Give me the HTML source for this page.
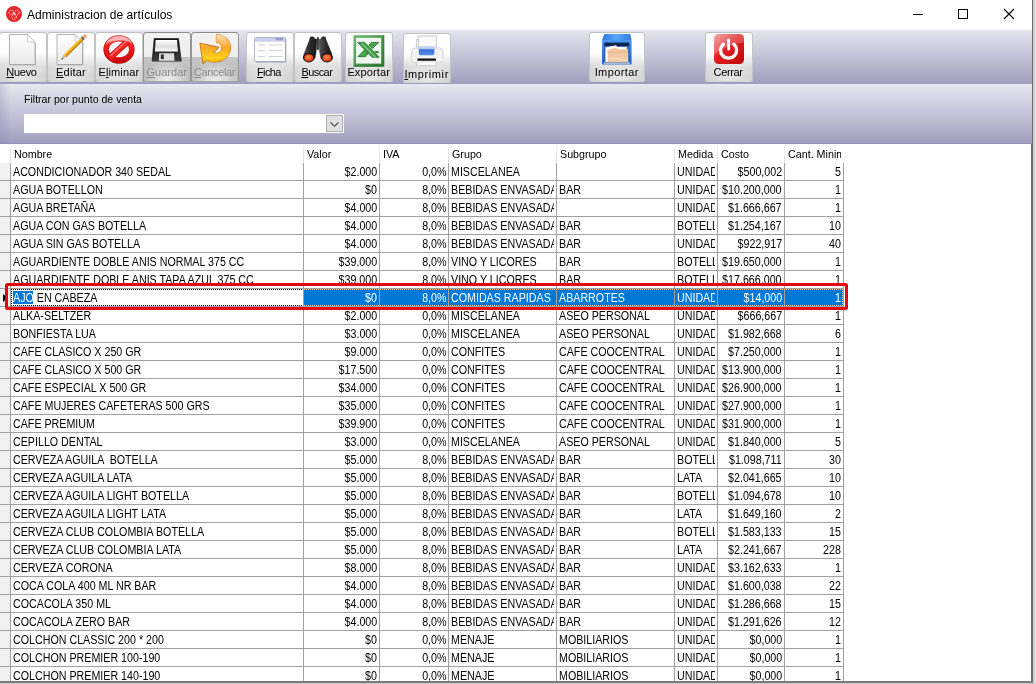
<!DOCTYPE html>
<html lang="es">
<head>
<meta charset="utf-8">
<title>Administracion de artículos</title>
<style>
html,body{margin:0;padding:0;}
body{width:1036px;height:684px;overflow:hidden;background:#fff;font-family:"Liberation Sans",sans-serif;position:relative;}
#win{position:absolute;left:0;top:0;width:1036px;height:684px;overflow:hidden;background:#fff;will-change:transform;}
#title{position:absolute;left:0;top:0;width:1032px;height:30px;background:#fff;}
#title .txt{position:absolute;left:27px;top:7px;font-size:12px;line-height:16px;color:#000;white-space:nowrap;letter-spacing:.05px;}
#appicon{position:absolute;left:5px;top:5px;width:18px;height:18px;}
.wc{position:absolute;top:0;height:30px;width:46px;}
#toolbar{position:absolute;left:0;top:30px;width:1032px;height:54px;background:linear-gradient(#e5e5ef 0%,#a09ebd 100%);}
.btn{position:absolute;top:2px;height:50px;width:48px;box-sizing:border-box;border:1px solid;border-color:#c1c1c1 #c4c4c4 #d2d2d2 #c4c4c4;border-radius:3.5px 3.5px 2.5px 2.5px;background:radial-gradient(ellipse 55% 50% at 50% 100%,rgba(255,255,255,.5),rgba(255,255,255,0) 100%),linear-gradient(#fff 0%,#fff 40%,#f1f1f1 52%,#dedede 68%,#d2d2d2 88%,#d0d0d0 100%);background-origin:border-box;}
.btn.dis{border-color:#8e8e8e #969696 #a4a4a4 #969696;background:radial-gradient(ellipse 50% 42% at 50% 100%,rgba(255,255,255,.8),rgba(255,255,255,0) 100%),linear-gradient(#f2f2f2 0%,#eeeeee 49.9%,#c5c5c5 50%,#bcbcbc 100%);background-origin:border-box;}
#icons{position:absolute;left:0;top:0;}
.btn .lb{position:absolute;left:-10px;right:-10px;top:32px;text-align:center;font-size:11px;line-height:14px;color:#000;white-space:nowrap;}
.btn.dis .lb{color:#8c8c8c;}
.btn .lb u{text-decoration:underline;text-underline-offset:1px;}
#filter{position:absolute;left:0;top:84px;width:1032px;height:60px;background:linear-gradient(90deg,rgba(120,118,165,.24) 0,rgba(120,118,165,0) 11px),linear-gradient(#e8e8f1 0%,#a2a0bf 97%,#908eae 100%);}
#filter .lab{position:absolute;left:24px;top:8px;font-size:11px;line-height:14px;color:#000;white-space:nowrap;transform:scaleX(.96);transform-origin:0 50%;}
#combo{position:absolute;left:24px;top:30px;width:320px;height:19px;background:#fff;}
#combo .dd{position:absolute;right:1px;top:1px;width:17px;height:17px;box-sizing:border-box;background:#e1e1e1;border:1px solid #adadad;}
#grid{position:absolute;left:0;top:144px;width:1031px;height:537px;background:#fff;overflow:hidden;}
#gridin{position:absolute;left:0;top:-144px;width:1031px;height:700px;}
.hc{position:absolute;top:144px;height:18px;overflow:hidden;font-size:11px;line-height:20px;color:#000;white-space:nowrap;}
.hc span{position:absolute;left:2.6px;top:0;transform:scaleX(.975);transform-origin:0 50%;}
.hs{position:absolute;top:144px;width:1px;height:18px;background:linear-gradient(#f4f4f4,#dcdcdc);}
.row{position:absolute;left:0;width:844px;height:18px;}
.row .ind{position:absolute;left:0;top:0;width:10px;height:17px;background:#f0f0f0;border-right:1px solid #a0a0a0;border-bottom:1px solid #a0a0a0;}
.c{position:absolute;top:0;height:17px;overflow:hidden;border-right:1px solid #a0a0a0;border-bottom:1px solid #a0a0a0;font-size:12.5px;line-height:18px;color:#000;white-space:nowrap;background:#fff;}
.c span{position:absolute;top:0;white-space:pre;transform:scaleX(.855);}
.c.l span{left:2px;transform-origin:0 50%;}
.c.r span{right:2px;transform-origin:100% 50%;}
.c.l::after,.hc::after{content:"";position:absolute;right:0;top:0;width:2px;height:100%;background:#fff;}
.row.sel .c{background:#0078d7;color:#fff;}
.row.sel .c::after{background:#0078d7;}
.row.sel .c.edit{background:#fff;color:#000;}
.row.sel .c.edit::after{background:#fff;}
.hl{font-weight:normal;color:#fff;position:relative;z-index:1;}
.hlbg{position:absolute;left:2px;top:2px;width:20px;height:13px;background:#0078d7;}
.tri{position:absolute;left:3px;top:5px;width:0;height:0;border-left:5px solid #000;border-top:4.5px solid transparent;border-bottom:4.5px solid transparent;}
.fx{position:absolute;height:1px;background:repeating-linear-gradient(90deg,#000 0,#000 1px,transparent 1px,transparent 2px);}
.fy{position:absolute;width:1px;background:repeating-linear-gradient(180deg,#000 0,#000 1px,transparent 1px,transparent 2px);}
.fx.w{background:repeating-linear-gradient(90deg,#eec39c 0,#eec39c 1px,transparent 1px,transparent 2px);}
.fy.w{background:repeating-linear-gradient(180deg,#eec39c 0,#eec39c 1px,transparent 1px,transparent 2px);}
#redbox{position:absolute;left:5px;top:283px;width:843px;height:27px;box-sizing:border-box;border:3px solid #e3060c;border-right-width:3.5px;border-radius:2.5px;}
#rb{position:absolute;left:1032px;top:0;width:4px;height:684px;background:linear-gradient(90deg,#6e6e6e 0,#6e6e6e 1px,#c4c4c4 1px,#e6e6e6 4px);}
#bb{position:absolute;left:0;top:681px;width:1033px;height:3px;background:linear-gradient(#7a7a7a 0,#7a7a7a 1.5px,#c8c8c8 2px,#d8d8d8 3px);}
#gr{position:absolute;left:1031px;top:144px;width:1px;height:538px;background:#6e6e6e;}
</style>
</head>
<body>
<div id="win">
<div id="title">
<div id="appicon"><svg width="18" height="18" viewBox="5 5 18 18"><circle cx="14" cy="14" r="8" fill="#e8282c"/><g fill="none" stroke="#fff" stroke-width=".9" stroke-dasharray="1.1 .9"><circle cx="11.300" cy="12.600" r="2.300"/><circle cx="16.700" cy="12.600" r="2.300"/><circle cx="14" cy="16.900" r="2.300"/></g><path d="M12.800 13.300h2.400" stroke="#fff" stroke-width="1"/></svg></div>
<div class="txt">Administracion de artículos</div>
<svg class="wc" style="left:895px" viewBox="0 0 46 30"><path d="M18 14.5h10" stroke="#000" stroke-width="1" fill="none"/></svg>
<svg class="wc" style="left:940px" viewBox="0 0 46 30"><rect x="18.5" y="9.5" width="9" height="9" stroke="#000" stroke-width="1" fill="none"/></svg>
<svg class="wc" style="left:986px" viewBox="0 0 46 30"><path d="M18 9l10 10M28 9l-10 10" stroke="#000" stroke-width="1.1" fill="none"/></svg>
</div>
<div id="toolbar">
<div class="btn" style="left:-1px;width:48px;top:2px"><div class="lb" style="letter-spacing:-0.28px;margin-left:-3.0px"><u>N</u>uevo</div></div>
<div class="btn" style="left:47px;width:48px;top:2px"><div class="lb" style="letter-spacing:0.18px;margin-left:-0.0px"><u>E</u>ditar</div></div>
<div class="btn" style="left:95px;width:48px;top:2px"><div class="lb" style="letter-spacing:0.13px;margin-left:-0.3px">E<u>l</u>iminar</div></div>
<div class="btn dis" style="left:143px;width:48px;top:2px"><div class="lb" style="letter-spacing:0.03px;margin-left:-0.6px"><u>G</u>uardar</div></div>
<div class="btn dis" style="left:191px;width:48px;top:2px"><div class="lb" style="letter-spacing:-0.33px;margin-left:-1.0px"><u>C</u>ancelar</div></div>
<div class="btn" style="left:246px;width:48px;top:2px"><div class="lb" style="letter-spacing:-0.65px;margin-left:-2.3px"><u>F</u>icha</div></div>
<div class="btn" style="left:294px;width:48px;top:2px"><div class="lb" style="letter-spacing:-0.58px;margin-left:-2.3px"><u>B</u>uscar</div></div>
<div class="btn" style="left:345px;width:48px;top:2px"><div class="lb" style="letter-spacing:0.14px;margin-left:-0.5px">Exportar</div></div>
<div class="btn" style="left:403px;width:48px;top:3px"><div class="lb" style="top:33px;letter-spacing:0.60px;margin-left:-0.7px"><u>I</u>mprimir</div></div>
<div class="btn" style="left:589px;width:56px;top:2px"><div class="lb" style="letter-spacing:0.40px;margin-left:-0.6px">Importar</div></div>
<div class="btn" style="left:705px;width:48px;top:2px"><div class="lb" style="letter-spacing:-0.34px;margin-left:-1.8px">Cerrar</div></div>
<svg id="icons" width="1032" height="54" viewBox="0 30 1032 54">
<defs>
<linearGradient id="gPage" x1="0" y1="0" x2="0" y2="1"><stop offset="0" stop-color="#ffffff"/><stop offset="1" stop-color="#e9e9e9"/></linearGradient>
<linearGradient id="gPen" x1="0" y1="0" x2="1" y2="1"><stop offset="0" stop-color="#ffe27a"/><stop offset=".5" stop-color="#f6b921"/><stop offset="1" stop-color="#b97c0c"/></linearGradient>
<linearGradient id="gRed" x1="0" y1="0" x2="0" y2="1"><stop offset="0" stop-color="#ff9a9a"/><stop offset=".35" stop-color="#f62020"/><stop offset="1" stop-color="#c40808"/></linearGradient>
<linearGradient id="gOr" gradientUnits="userSpaceOnUse" x1="0" y1="34" x2="0" y2="64"><stop offset="0" stop-color="#ffe6c4"/><stop offset=".45" stop-color="#ffa628"/><stop offset=".8" stop-color="#ffd21a"/><stop offset="1" stop-color="#f09a10"/></linearGradient>
<linearGradient id="gBlk" x1="0" y1="0" x2="0" y2="1"><stop offset="0" stop-color="#161616"/><stop offset="1" stop-color="#3c3c3c"/></linearGradient>
<linearGradient id="gLbl" x1="0" y1="0" x2="0" y2="1"><stop offset="0" stop-color="#ffffff"/><stop offset=".6" stop-color="#dedede"/><stop offset="1" stop-color="#fafafa"/></linearGradient>
<linearGradient id="gGreen" x1="0" y1="0" x2="1" y2="1"><stop offset="0" stop-color="#6cba6c"/><stop offset="1" stop-color="#2a7a2e"/></linearGradient>
<linearGradient id="gBlue" x1="0" y1="0" x2="0" y2="1"><stop offset="0" stop-color="#a8c4f4"/><stop offset=".5" stop-color="#3f74dc"/><stop offset="1" stop-color="#5b8fe8"/></linearGradient>
<linearGradient id="gBox" x1="0" y1="0" x2="0" y2="1"><stop offset="0" stop-color="#4a9af0"/><stop offset="1" stop-color="#1f5fd0"/></linearGradient>
<linearGradient id="gPow" x1="0" y1="0" x2="1" y2="1"><stop offset="0" stop-color="#f08a8a"/><stop offset=".45" stop-color="#e02020"/><stop offset="1" stop-color="#c00808"/></linearGradient>
<radialGradient id="gLens" cx=".45" cy=".4" r=".6"><stop offset="0" stop-color="#ff8a50"/><stop offset="1" stop-color="#e03410"/></radialGradient>
<linearGradient id="gBar" x1="0" y1="0" x2="1" y2="0"><stop offset="0" stop-color="#5a5a5a"/><stop offset=".5" stop-color="#2c2c2c"/><stop offset="1" stop-color="#161616"/></linearGradient>
<linearGradient id="gPen2" x1="0" y1="0" x2="0" y2="1"><stop offset="0" stop-color="#fbd25a"/><stop offset=".45" stop-color="#f5b31c"/><stop offset="1" stop-color="#a87208"/></linearGradient>
<linearGradient id="gBoxT" x1="0" y1="0" x2="1" y2="0"><stop offset="0" stop-color="#2f78e0"/><stop offset=".5" stop-color="#5aa6f8"/><stop offset="1" stop-color="#2f78e0"/></linearGradient>
</defs>
<!-- Nuevo -->
<g>
<path d="M9.5 34.5h18l7.5 7.5v22.5h-25.5z" fill="url(#gPage)" stroke="#b2b2b2" stroke-width="1"/>
<path d="M27.5 34.5v7.5h7.5z" fill="#f6f6f6" stroke="#c4c4c4" stroke-width=".8"/>
<path d="M10 65h25.5v-22" fill="none" stroke="#9a9a9a" stroke-width=".8" opacity=".7"/>
</g>
<!-- Editar -->
<g>
<path d="M57 34.5h18l7.5 7.5v22.5h-25.5z" fill="url(#gPage)" stroke="#b2b2b2" stroke-width="1"/>
<path d="M75 34.5v7.5h7.5z" fill="#f6f6f6" stroke="#c4c4c4" stroke-width=".8"/>
<path d="M57.5 65h25.5v-22" fill="none" stroke="#9a9a9a" stroke-width=".8" opacity=".7"/>
<g transform="translate(61 59.800) rotate(-44.600)">
<path d="M0 0L5.500-1.900V1.900z" fill="#d9b98a"/>
<path d="M0 0L2.400-.85V.85z" fill="#4a4440"/>
<rect x="5.500" y="-1.900" width="24" height="3.800" fill="url(#gPen2)"/>
<rect x="29.500" y="-1.900" width="2" height="3.800" fill="#5c6078"/>
<path d="M31.500-1.900h2a1.700 1.700 0 0 1 1.700 1.700v.4a1.700 1.700 0 0 1-1.700 1.700h-2z" fill="#f0a070"/>
</g>
</g>
<!-- Eliminar -->
<g>
<ellipse cx="119" cy="49.500" rx="15.600" ry="14.300" fill="#b00a0a"/>
<ellipse cx="119" cy="49.400" rx="14.900" ry="13.600" fill="url(#gRed)"/>
<ellipse cx="119" cy="49.400" rx="10.400" ry="8.300" fill="#fff" stroke="#c41010" stroke-width=".7"/>
<path d="M110.300 57.300L127.800 41.300" stroke="#c20c0c" stroke-width="6.400"/>
<path d="M109.300 58.200L128.800 40.400" stroke="#f42020" stroke-width="5.400"/>
<path d="M110.300 55.800L127 40.600" stroke="#ff7a7a" stroke-width="1.800" opacity=".8"/>
<path d="M105.500 44.500a14.500 12 0 0 1 27-1a17 9.500 0 0 0-27 1z" fill="#ffc0c0" opacity=".8"/>
</g>
<!-- Guardar -->
<g>
<path d="M154.2 38.5h24.3l2.8 22.6h-29.2z" fill="url(#gBlk)" stroke="#111" stroke-width=".6" stroke-linejoin="round"/>
<path d="M155.6 40h21.4l.9 11.4h-23z" fill="url(#gLbl)"/>
<path d="M159.2 53.3h14.8l.5 7.8h-15.7z" fill="#dcdcdc"/>
<rect x="160.8" y="54.5" width="3" height="4.6" fill="#2a2a2a"/>
<path d="M152 61.2h29.4" stroke="#6a6a6a" stroke-width=".8"/>
</g>
<!-- Cancelar -->
<g stroke="#c87a14" stroke-width="1.100" stroke-linejoin="round">
<path id="cA" d="M216.400 34.600c8 .4 14 5.600 14 13 0 8.200-7 14.400-16.200 14.400-3.600 0-6.400-.8-8.700-2.300l6-8c1.300 1.100 2.800 1.600 4.600 1.600 3.400 0 5.700-2.200 5.700-5.300 0-3.200-2.200-5.400-5.400-5.800z" fill="url(#gOr)"/>
<path id="cB" d="M200 43.400l18.800 4-6.600 6.500-9.200 9.800z" fill="url(#gOr)"/>
</g>
<path d="M216.400 34.600c8 .4 14 5.600 14 13 0 8.200-7 14.400-16.200 14.400-3.600 0-6.400-.8-8.700-2.300l6-8c1.300 1.100 2.800 1.600 4.600 1.600 3.400 0 5.700-2.200 5.700-5.300 0-3.200-2.200-5.400-5.400-5.800z" fill="url(#gOr)"/>
<path d="M200.600 44.100l17 3.600-6 6-8.200 8.700z" fill="url(#gOr)"/>
<!-- Ficha -->
<g>
<rect x="254.500" y="37.500" width="31" height="24" rx="1" fill="#fdfdfe" stroke="#b4b4cf" stroke-width="1"/>
<rect x="255" y="38" width="30" height="3.800" fill="#cfcff0"/>
<rect x="275.500" y="38" width="7.500" height="2.200" fill="#9a9acb"/>
<path d="M285.900 39v23.100h-30.500" fill="none" stroke="#8a8aa6" stroke-width=".9" opacity=".75"/>
<g stroke="#d2d2d2" stroke-width="1.100"><path d="M258 45h7M258 50.500h7M258 56.500h7M269 45h13M269 50.500h13M269 56.500h13"/></g>
</g>
<!-- Buscar -->
<g>
<rect x="309.600" y="36.600" width="5" height="5" rx="2" fill="#2a2a2a"/>
<rect x="321" y="36.600" width="5" height="5" rx="2" fill="#2a2a2a"/>
<path d="M309.500 39.500c3-1.500 6-1 7.500 0l-.6 12-1.200 7h-12.200l.800-5z" fill="url(#gBar)"/>
<path d="M326.200 39.500c-3-1.500-6-1-7.500 0l.6 12 1.200 7h12.200l-.8-5z" fill="url(#gBar)"/>
<rect x="316.700" y="37" width="2.200" height="13" rx="1" fill="#3a3a3a"/>
<ellipse cx="308.800" cy="57.600" rx="5.800" ry="4.900" fill="#141414"/>
<ellipse cx="327" cy="57.600" rx="5.800" ry="4.900" fill="#141414"/>
<ellipse cx="308.800" cy="57.800" rx="4.500" ry="3.600" fill="url(#gLens)"/>
<ellipse cx="327" cy="57.800" rx="4.500" ry="3.600" fill="url(#gLens)"/>
</g>
<!-- Exportar -->
<g>
<rect x="353.500" y="35.200" width="30.300" height="31" fill="url(#gGreen)"/>
<path d="M353.500 66.200h30.300v-31" fill="none" stroke="#256f2a" stroke-width="1"/>
<rect x="356" y="37.800" width="25.200" height="25.800" fill="#eef7ee"/>
<path d="M371.300 42.400h7.200l-6.100 6.300-3.500-3.600zM357.900 56.700h7.400l3.700-3.900-3.600-3.700z" fill="#4aa64e" stroke="#226d28" stroke-width=".8" stroke-linejoin="round"/>
<path d="M357.700 42.400h7l14.400 14.900h-7z" fill="#3f9c45" stroke="#226d28" stroke-width=".8" stroke-linejoin="round"/>
<path d="M361.600 43.300l13.800 14" stroke="#8ed392" stroke-width="1.300" opacity=".85"/>
<path d="M374 51h4.600v2.200h-2.500z" fill="#2f8a35"/>
</g>
<!-- Imprimir -->
<g>
<path d="M416.500 39.500h2v10h-2z" fill="#f4f4f4" stroke="#bdbdbd" stroke-width=".7"/>
<rect x="418.300" y="36" width="18" height="14" fill="#fbfbfb" stroke="#bdbdbd" stroke-width=".8"/>
<rect x="411.500" y="48" width="31.500" height="14.800" rx="3.500" fill="#f3f3f3" stroke="#cfcfcf" stroke-width=".8"/>
<path d="M418.800 46h15.600v7.500c0 1-.8 1.700-1.700 1.700h-12.200c-1 0-1.700-.8-1.700-1.700z" fill="url(#gBlue)"/>
<rect x="418.800" y="46" width="15.600" height="3" fill="#e8eefb" opacity=".6"/>
<rect x="417.300" y="58.600" width="18.700" height="2.300" rx=".8" fill="#111"/>
<path d="M417.800 61h17.800l1.400 4.600h-20.600z" fill="#fafafa" stroke="#bdbdbd" stroke-width=".7"/>
</g>
<!-- Importar -->
<g>
<path d="M604.300 34h26l1.300 6.200h-29.600z" fill="url(#gBoxT)"/>
<rect x="602" y="40" width="29.600" height="24.400" rx="1" fill="url(#gBox)"/>
<rect x="604.300" y="42.600" width="25" height="19.800" fill="#13244e"/>
<rect x="604.300" y="46" width="25" height="16.400" fill="#3f6fc4"/>
<path d="M605.500 47.500l10.500-2.300 1.200 1.800h9.500v15h-21.200z" fill="#fdfdfd"/>
<path d="M607.500 50l8.500-2.600 2 1.900h10l.3 13h-20.300z" fill="#f1c9a2"/>
<path d="M607.700 51.500h20.300v1.200h-20.300z" fill="#e0ae84" opacity=".6"/>
<path d="M609 58.500h9l3 1.500h7" stroke="#fae3cc" stroke-width="1.200" fill="none" opacity=".8"/>
<rect x="603.500" y="62.400" width="26.600" height="2" fill="#aab8d2"/>
</g>
<!-- Cerrar -->
<g>
<rect x="714" y="34" width="30" height="30" rx="4.500" fill="url(#gPow)"/>
<path d="M714 38.500a4.500 4.500 0 0 1 4.500-4.500h21a4.500 4.500 0 0 1 4.500 4.500v4c-10 1-22 5-30 12z" fill="#fff" opacity=".22"/>
<path d="M723.300 44.200a8 8 0 1 0 10.600 0" fill="none" stroke="#fff" stroke-width="3.300" stroke-linecap="round"/>
<path d="M728.600 40v9" stroke="#fff" stroke-width="3" stroke-linecap="round"/>
</g>
</svg>
</div>
<div id="filter">
<div class="lab">Filtrar por punto de venta</div>
<div id="combo"><div class="dd"><svg width="15" height="15" viewBox="0 0 15 15" style="position:absolute;left:0;top:0"><path d="M3.500 6.300l4 4 4-4" stroke="#444" stroke-width="1.100" fill="none"/></svg></div></div>
</div>
<div id="grid"><div id="gridin">
<div class="hc" style="left:11px;width:292px"><span>Nombre</span></div>
<div class="hs" style="left:303px"></div>
<div class="hc" style="left:304px;width:75px"><span>Valor</span></div>
<div class="hs" style="left:379px"></div>
<div class="hc" style="left:380px;width:68px"><span>IVA</span></div>
<div class="hs" style="left:448px"></div>
<div class="hc" style="left:449px;width:107px"><span>Grupo</span></div>
<div class="hs" style="left:556px"></div>
<div class="hc" style="left:557px;width:117px"><span>Subgrupo</span></div>
<div class="hs" style="left:674px"></div>
<div class="hc" style="left:675px;width:42px"><span>Medida</span></div>
<div class="hs" style="left:717px"></div>
<div class="hc" style="left:718px;width:66px"><span>Costo</span></div>
<div class="hs" style="left:784px"></div>
<div class="hc" style="left:785px;width:58px"><span>Cant. Minima</span></div>
<div class="hs" style="left:10px"></div>
<div class="row" style="top:163px">
<div class="ind"></div>
<div class="c l" style="left:11px;width:292px"><span>ACONDICIONADOR 340 SEDAL</span></div>
<div class="c r" style="left:304px;width:75px"><span>$2.000</span></div>
<div class="c r" style="left:380px;width:68px"><span>0,0%</span></div>
<div class="c l" style="left:449px;width:107px"><span>MISCELANEA</span></div>
<div class="c l" style="left:557px;width:117px"><span></span></div>
<div class="c l" style="left:675px;width:42px"><span>UNIDAD</span></div>
<div class="c r" style="left:718px;width:66px"><span>$500,002</span></div>
<div class="c r" style="left:785px;width:58px"><span>5</span></div>
</div>
<div class="row" style="top:181px">
<div class="ind"></div>
<div class="c l" style="left:11px;width:292px"><span>AGUA BOTELLON</span></div>
<div class="c r" style="left:304px;width:75px"><span>$0</span></div>
<div class="c r" style="left:380px;width:68px"><span>8,0%</span></div>
<div class="c l" style="left:449px;width:107px"><span>BEBIDAS ENVASADAS</span></div>
<div class="c l" style="left:557px;width:117px"><span>BAR</span></div>
<div class="c l" style="left:675px;width:42px"><span>UNIDAD</span></div>
<div class="c r" style="left:718px;width:66px"><span>$10.200,000</span></div>
<div class="c r" style="left:785px;width:58px"><span>1</span></div>
</div>
<div class="row" style="top:199px">
<div class="ind"></div>
<div class="c l" style="left:11px;width:292px"><span>AGUA BRETAÑA</span></div>
<div class="c r" style="left:304px;width:75px"><span>$4.000</span></div>
<div class="c r" style="left:380px;width:68px"><span>8,0%</span></div>
<div class="c l" style="left:449px;width:107px"><span>BEBIDAS ENVASADAS</span></div>
<div class="c l" style="left:557px;width:117px"><span></span></div>
<div class="c l" style="left:675px;width:42px"><span>UNIDAD</span></div>
<div class="c r" style="left:718px;width:66px"><span>$1.666,667</span></div>
<div class="c r" style="left:785px;width:58px"><span>1</span></div>
</div>
<div class="row" style="top:217px">
<div class="ind"></div>
<div class="c l" style="left:11px;width:292px"><span>AGUA CON GAS BOTELLA</span></div>
<div class="c r" style="left:304px;width:75px"><span>$4.000</span></div>
<div class="c r" style="left:380px;width:68px"><span>8,0%</span></div>
<div class="c l" style="left:449px;width:107px"><span>BEBIDAS ENVASADAS</span></div>
<div class="c l" style="left:557px;width:117px"><span>BAR</span></div>
<div class="c l" style="left:675px;width:42px"><span>BOTELLA</span></div>
<div class="c r" style="left:718px;width:66px"><span>$1.254,167</span></div>
<div class="c r" style="left:785px;width:58px"><span>10</span></div>
</div>
<div class="row" style="top:235px">
<div class="ind"></div>
<div class="c l" style="left:11px;width:292px"><span>AGUA SIN GAS BOTELLA</span></div>
<div class="c r" style="left:304px;width:75px"><span>$4.000</span></div>
<div class="c r" style="left:380px;width:68px"><span>8,0%</span></div>
<div class="c l" style="left:449px;width:107px"><span>BEBIDAS ENVASADAS</span></div>
<div class="c l" style="left:557px;width:117px"><span>BAR</span></div>
<div class="c l" style="left:675px;width:42px"><span>UNIDAD</span></div>
<div class="c r" style="left:718px;width:66px"><span>$922,917</span></div>
<div class="c r" style="left:785px;width:58px"><span>40</span></div>
</div>
<div class="row" style="top:253px">
<div class="ind"></div>
<div class="c l" style="left:11px;width:292px"><span>AGUARDIENTE DOBLE ANIS NORMAL 375 CC</span></div>
<div class="c r" style="left:304px;width:75px"><span>$39.000</span></div>
<div class="c r" style="left:380px;width:68px"><span>8,0%</span></div>
<div class="c l" style="left:449px;width:107px"><span>VINO Y LICORES</span></div>
<div class="c l" style="left:557px;width:117px"><span>BAR</span></div>
<div class="c l" style="left:675px;width:42px"><span>BOTELLA</span></div>
<div class="c r" style="left:718px;width:66px"><span>$19.650,000</span></div>
<div class="c r" style="left:785px;width:58px"><span>1</span></div>
</div>
<div class="row" style="top:271px">
<div class="ind"></div>
<div class="c l" style="left:11px;width:292px"><span>AGUARDIENTE DOBLE ANIS TAPA AZUL 375 CC</span></div>
<div class="c r" style="left:304px;width:75px"><span>$39.000</span></div>
<div class="c r" style="left:380px;width:68px"><span>8,0%</span></div>
<div class="c l" style="left:449px;width:107px"><span>VINO Y LICORES</span></div>
<div class="c l" style="left:557px;width:117px"><span>BAR</span></div>
<div class="c l" style="left:675px;width:42px"><span>BOTELLA</span></div>
<div class="c r" style="left:718px;width:66px"><span>$17.666,000</span></div>
<div class="c r" style="left:785px;width:58px"><span>1</span></div>
</div>
<div class="row sel" style="top:289px">
<div class="ind"><i class="tri"></i></div>
<div class="c l edit" style="left:11px;width:292px"><i class="hlbg"></i><span><b class="hl">AJO</b> EN CABEZA</span></div>
<div class="c r" style="left:304px;width:75px"><span>$0</span></div>
<div class="c r" style="left:380px;width:68px"><span>8,0%</span></div>
<div class="c l" style="left:449px;width:107px"><span>COMIDAS RAPIDAS</span></div>
<div class="c l" style="left:557px;width:117px"><span>ABARROTES</span></div>
<div class="c l" style="left:675px;width:42px"><span>UNIDAD</span></div>
<div class="c r" style="left:718px;width:66px"><span>$14,000</span></div>
<div class="c r" style="left:785px;width:58px"><span>1</span></div>
<div class="fx" style="left:11px;top:0;width:292px"></div><div class="fx" style="left:11px;top:16px;width:292px"></div><div class="fy" style="left:11px;top:0;height:17px"></div>
<div class="fx w" style="left:304px;top:0;width:539px"></div><div class="fx w" style="left:304px;top:16px;width:539px"></div><div class="fy w" style="left:842px;top:0;height:17px"></div>
</div>
<div class="row" style="top:307px">
<div class="ind"></div>
<div class="c l" style="left:11px;width:292px"><span>ALKA-SELTZER</span></div>
<div class="c r" style="left:304px;width:75px"><span>$2.000</span></div>
<div class="c r" style="left:380px;width:68px"><span>0,0%</span></div>
<div class="c l" style="left:449px;width:107px"><span>MISCELANEA</span></div>
<div class="c l" style="left:557px;width:117px"><span>ASEO PERSONAL</span></div>
<div class="c l" style="left:675px;width:42px"><span>UNIDAD</span></div>
<div class="c r" style="left:718px;width:66px"><span>$666,667</span></div>
<div class="c r" style="left:785px;width:58px"><span>1</span></div>
</div>
<div class="row" style="top:325px">
<div class="ind"></div>
<div class="c l" style="left:11px;width:292px"><span>BONFIESTA LUA</span></div>
<div class="c r" style="left:304px;width:75px"><span>$3.000</span></div>
<div class="c r" style="left:380px;width:68px"><span>0,0%</span></div>
<div class="c l" style="left:449px;width:107px"><span>MISCELANEA</span></div>
<div class="c l" style="left:557px;width:117px"><span>ASEO PERSONAL</span></div>
<div class="c l" style="left:675px;width:42px"><span>UNIDAD</span></div>
<div class="c r" style="left:718px;width:66px"><span>$1.982,668</span></div>
<div class="c r" style="left:785px;width:58px"><span>6</span></div>
</div>
<div class="row" style="top:343px">
<div class="ind"></div>
<div class="c l" style="left:11px;width:292px"><span>CAFE CLASICO X 250 GR</span></div>
<div class="c r" style="left:304px;width:75px"><span>$9.000</span></div>
<div class="c r" style="left:380px;width:68px"><span>0,0%</span></div>
<div class="c l" style="left:449px;width:107px"><span>CONFITES</span></div>
<div class="c l" style="left:557px;width:117px"><span>CAFE COOCENTRAL</span></div>
<div class="c l" style="left:675px;width:42px"><span>UNIDAD</span></div>
<div class="c r" style="left:718px;width:66px"><span>$7.250,000</span></div>
<div class="c r" style="left:785px;width:58px"><span>1</span></div>
</div>
<div class="row" style="top:361px">
<div class="ind"></div>
<div class="c l" style="left:11px;width:292px"><span>CAFE CLASICO X 500 GR</span></div>
<div class="c r" style="left:304px;width:75px"><span>$17.500</span></div>
<div class="c r" style="left:380px;width:68px"><span>0,0%</span></div>
<div class="c l" style="left:449px;width:107px"><span>CONFITES</span></div>
<div class="c l" style="left:557px;width:117px"><span>CAFE COOCENTRAL</span></div>
<div class="c l" style="left:675px;width:42px"><span>UNIDAD</span></div>
<div class="c r" style="left:718px;width:66px"><span>$13.900,000</span></div>
<div class="c r" style="left:785px;width:58px"><span>1</span></div>
</div>
<div class="row" style="top:379px">
<div class="ind"></div>
<div class="c l" style="left:11px;width:292px"><span>CAFE ESPECIAL X 500 GR</span></div>
<div class="c r" style="left:304px;width:75px"><span>$34.000</span></div>
<div class="c r" style="left:380px;width:68px"><span>0,0%</span></div>
<div class="c l" style="left:449px;width:107px"><span>CONFITES</span></div>
<div class="c l" style="left:557px;width:117px"><span>CAFE COOCENTRAL</span></div>
<div class="c l" style="left:675px;width:42px"><span>UNIDAD</span></div>
<div class="c r" style="left:718px;width:66px"><span>$26.900,000</span></div>
<div class="c r" style="left:785px;width:58px"><span>1</span></div>
</div>
<div class="row" style="top:397px">
<div class="ind"></div>
<div class="c l" style="left:11px;width:292px"><span>CAFE MUJERES CAFETERAS 500 GRS</span></div>
<div class="c r" style="left:304px;width:75px"><span>$35.000</span></div>
<div class="c r" style="left:380px;width:68px"><span>0,0%</span></div>
<div class="c l" style="left:449px;width:107px"><span>CONFITES</span></div>
<div class="c l" style="left:557px;width:117px"><span>CAFE COOCENTRAL</span></div>
<div class="c l" style="left:675px;width:42px"><span>UNIDAD</span></div>
<div class="c r" style="left:718px;width:66px"><span>$27.900,000</span></div>
<div class="c r" style="left:785px;width:58px"><span>1</span></div>
</div>
<div class="row" style="top:415px">
<div class="ind"></div>
<div class="c l" style="left:11px;width:292px"><span>CAFE PREMIUM</span></div>
<div class="c r" style="left:304px;width:75px"><span>$39.900</span></div>
<div class="c r" style="left:380px;width:68px"><span>0,0%</span></div>
<div class="c l" style="left:449px;width:107px"><span>CONFITES</span></div>
<div class="c l" style="left:557px;width:117px"><span>CAFE COOCENTRAL</span></div>
<div class="c l" style="left:675px;width:42px"><span>UNIDAD</span></div>
<div class="c r" style="left:718px;width:66px"><span>$31.900,000</span></div>
<div class="c r" style="left:785px;width:58px"><span>1</span></div>
</div>
<div class="row" style="top:433px">
<div class="ind"></div>
<div class="c l" style="left:11px;width:292px"><span>CEPILLO DENTAL</span></div>
<div class="c r" style="left:304px;width:75px"><span>$3.000</span></div>
<div class="c r" style="left:380px;width:68px"><span>0,0%</span></div>
<div class="c l" style="left:449px;width:107px"><span>MISCELANEA</span></div>
<div class="c l" style="left:557px;width:117px"><span>ASEO PERSONAL</span></div>
<div class="c l" style="left:675px;width:42px"><span>UNIDAD</span></div>
<div class="c r" style="left:718px;width:66px"><span>$1.840,000</span></div>
<div class="c r" style="left:785px;width:58px"><span>5</span></div>
</div>
<div class="row" style="top:451px">
<div class="ind"></div>
<div class="c l" style="left:11px;width:292px"><span>CERVEZA AGUILA  BOTELLA</span></div>
<div class="c r" style="left:304px;width:75px"><span>$5.000</span></div>
<div class="c r" style="left:380px;width:68px"><span>8,0%</span></div>
<div class="c l" style="left:449px;width:107px"><span>BEBIDAS ENVASADAS</span></div>
<div class="c l" style="left:557px;width:117px"><span>BAR</span></div>
<div class="c l" style="left:675px;width:42px"><span>BOTELLA</span></div>
<div class="c r" style="left:718px;width:66px"><span>$1.098,711</span></div>
<div class="c r" style="left:785px;width:58px"><span>30</span></div>
</div>
<div class="row" style="top:469px">
<div class="ind"></div>
<div class="c l" style="left:11px;width:292px"><span>CERVEZA AGUILA LATA</span></div>
<div class="c r" style="left:304px;width:75px"><span>$5.000</span></div>
<div class="c r" style="left:380px;width:68px"><span>8,0%</span></div>
<div class="c l" style="left:449px;width:107px"><span>BEBIDAS ENVASADAS</span></div>
<div class="c l" style="left:557px;width:117px"><span>BAR</span></div>
<div class="c l" style="left:675px;width:42px"><span>LATA</span></div>
<div class="c r" style="left:718px;width:66px"><span>$2.041,665</span></div>
<div class="c r" style="left:785px;width:58px"><span>10</span></div>
</div>
<div class="row" style="top:487px">
<div class="ind"></div>
<div class="c l" style="left:11px;width:292px"><span>CERVEZA AGUILA LIGHT BOTELLA</span></div>
<div class="c r" style="left:304px;width:75px"><span>$5.000</span></div>
<div class="c r" style="left:380px;width:68px"><span>8,0%</span></div>
<div class="c l" style="left:449px;width:107px"><span>BEBIDAS ENVASADAS</span></div>
<div class="c l" style="left:557px;width:117px"><span>BAR</span></div>
<div class="c l" style="left:675px;width:42px"><span>BOTELLA</span></div>
<div class="c r" style="left:718px;width:66px"><span>$1.094,678</span></div>
<div class="c r" style="left:785px;width:58px"><span>10</span></div>
</div>
<div class="row" style="top:505px">
<div class="ind"></div>
<div class="c l" style="left:11px;width:292px"><span>CERVEZA AGUILA LIGHT LATA</span></div>
<div class="c r" style="left:304px;width:75px"><span>$5.000</span></div>
<div class="c r" style="left:380px;width:68px"><span>8,0%</span></div>
<div class="c l" style="left:449px;width:107px"><span>BEBIDAS ENVASADAS</span></div>
<div class="c l" style="left:557px;width:117px"><span>BAR</span></div>
<div class="c l" style="left:675px;width:42px"><span>LATA</span></div>
<div class="c r" style="left:718px;width:66px"><span>$1.649,160</span></div>
<div class="c r" style="left:785px;width:58px"><span>2</span></div>
</div>
<div class="row" style="top:523px">
<div class="ind"></div>
<div class="c l" style="left:11px;width:292px"><span>CERVEZA CLUB COLOMBIA BOTELLA</span></div>
<div class="c r" style="left:304px;width:75px"><span>$5.000</span></div>
<div class="c r" style="left:380px;width:68px"><span>8,0%</span></div>
<div class="c l" style="left:449px;width:107px"><span>BEBIDAS ENVASADAS</span></div>
<div class="c l" style="left:557px;width:117px"><span>BAR</span></div>
<div class="c l" style="left:675px;width:42px"><span>BOTELLA</span></div>
<div class="c r" style="left:718px;width:66px"><span>$1.583,133</span></div>
<div class="c r" style="left:785px;width:58px"><span>15</span></div>
</div>
<div class="row" style="top:541px">
<div class="ind"></div>
<div class="c l" style="left:11px;width:292px"><span>CERVEZA CLUB COLOMBIA LATA</span></div>
<div class="c r" style="left:304px;width:75px"><span>$5.000</span></div>
<div class="c r" style="left:380px;width:68px"><span>8,0%</span></div>
<div class="c l" style="left:449px;width:107px"><span>BEBIDAS ENVASADAS</span></div>
<div class="c l" style="left:557px;width:117px"><span>BAR</span></div>
<div class="c l" style="left:675px;width:42px"><span>LATA</span></div>
<div class="c r" style="left:718px;width:66px"><span>$2.241,667</span></div>
<div class="c r" style="left:785px;width:58px"><span>228</span></div>
</div>
<div class="row" style="top:559px">
<div class="ind"></div>
<div class="c l" style="left:11px;width:292px"><span>CERVEZA CORONA</span></div>
<div class="c r" style="left:304px;width:75px"><span>$8.000</span></div>
<div class="c r" style="left:380px;width:68px"><span>8,0%</span></div>
<div class="c l" style="left:449px;width:107px"><span>BEBIDAS ENVASADAS</span></div>
<div class="c l" style="left:557px;width:117px"><span>BAR</span></div>
<div class="c l" style="left:675px;width:42px"><span>UNIDAD</span></div>
<div class="c r" style="left:718px;width:66px"><span>$3.162,633</span></div>
<div class="c r" style="left:785px;width:58px"><span>1</span></div>
</div>
<div class="row" style="top:577px">
<div class="ind"></div>
<div class="c l" style="left:11px;width:292px"><span>COCA COLA 400 ML NR BAR</span></div>
<div class="c r" style="left:304px;width:75px"><span>$4.000</span></div>
<div class="c r" style="left:380px;width:68px"><span>8,0%</span></div>
<div class="c l" style="left:449px;width:107px"><span>BEBIDAS ENVASADAS</span></div>
<div class="c l" style="left:557px;width:117px"><span>BAR</span></div>
<div class="c l" style="left:675px;width:42px"><span>UNIDAD</span></div>
<div class="c r" style="left:718px;width:66px"><span>$1.600,038</span></div>
<div class="c r" style="left:785px;width:58px"><span>22</span></div>
</div>
<div class="row" style="top:595px">
<div class="ind"></div>
<div class="c l" style="left:11px;width:292px"><span>COCACOLA 350 ML</span></div>
<div class="c r" style="left:304px;width:75px"><span>$4.000</span></div>
<div class="c r" style="left:380px;width:68px"><span>8,0%</span></div>
<div class="c l" style="left:449px;width:107px"><span>BEBIDAS ENVASADAS</span></div>
<div class="c l" style="left:557px;width:117px"><span>BAR</span></div>
<div class="c l" style="left:675px;width:42px"><span>UNIDAD</span></div>
<div class="c r" style="left:718px;width:66px"><span>$1.286,668</span></div>
<div class="c r" style="left:785px;width:58px"><span>15</span></div>
</div>
<div class="row" style="top:613px">
<div class="ind"></div>
<div class="c l" style="left:11px;width:292px"><span>COCACOLA ZERO BAR</span></div>
<div class="c r" style="left:304px;width:75px"><span>$4.000</span></div>
<div class="c r" style="left:380px;width:68px"><span>8,0%</span></div>
<div class="c l" style="left:449px;width:107px"><span>BEBIDAS ENVASADAS</span></div>
<div class="c l" style="left:557px;width:117px"><span>BAR</span></div>
<div class="c l" style="left:675px;width:42px"><span>UNIDAD</span></div>
<div class="c r" style="left:718px;width:66px"><span>$1.291,626</span></div>
<div class="c r" style="left:785px;width:58px"><span>12</span></div>
</div>
<div class="row" style="top:631px">
<div class="ind"></div>
<div class="c l" style="left:11px;width:292px"><span>COLCHON CLASSIC 200 * 200</span></div>
<div class="c r" style="left:304px;width:75px"><span>$0</span></div>
<div class="c r" style="left:380px;width:68px"><span>0,0%</span></div>
<div class="c l" style="left:449px;width:107px"><span>MENAJE</span></div>
<div class="c l" style="left:557px;width:117px"><span>MOBILIARIOS</span></div>
<div class="c l" style="left:675px;width:42px"><span>UNIDAD</span></div>
<div class="c r" style="left:718px;width:66px"><span>$0,000</span></div>
<div class="c r" style="left:785px;width:58px"><span>1</span></div>
</div>
<div class="row" style="top:649px">
<div class="ind"></div>
<div class="c l" style="left:11px;width:292px"><span>COLCHON PREMIER 100-190</span></div>
<div class="c r" style="left:304px;width:75px"><span>$0</span></div>
<div class="c r" style="left:380px;width:68px"><span>0,0%</span></div>
<div class="c l" style="left:449px;width:107px"><span>MENAJE</span></div>
<div class="c l" style="left:557px;width:117px"><span>MOBILIARIOS</span></div>
<div class="c l" style="left:675px;width:42px"><span>UNIDAD</span></div>
<div class="c r" style="left:718px;width:66px"><span>$0,000</span></div>
<div class="c r" style="left:785px;width:58px"><span>1</span></div>
</div>
<div class="row" style="top:667px">
<div class="ind"></div>
<div class="c l" style="left:11px;width:292px"><span>COLCHON PREMIER 140-190</span></div>
<div class="c r" style="left:304px;width:75px"><span>$0</span></div>
<div class="c r" style="left:380px;width:68px"><span>0,0%</span></div>
<div class="c l" style="left:449px;width:107px"><span>MENAJE</span></div>
<div class="c l" style="left:557px;width:117px"><span>MOBILIARIOS</span></div>
<div class="c l" style="left:675px;width:42px"><span>UNIDAD</span></div>
<div class="c r" style="left:718px;width:66px"><span>$0,000</span></div>
<div class="c r" style="left:785px;width:58px"><span>1</span></div>
</div>
</div></div>
<div id="redbox"></div>
<div id="gr"></div>
<div id="rb"></div>
<div id="bb"></div>
</div>
</body>
</html>
